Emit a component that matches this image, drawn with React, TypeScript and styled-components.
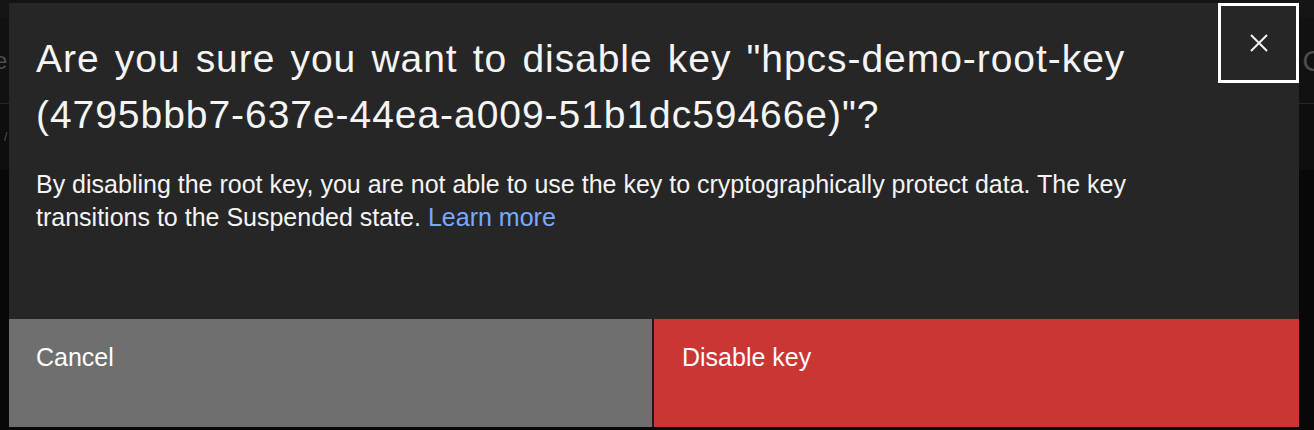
import React from "react";
import styled, { createGlobalStyle } from "styled-components";

const Global = createGlobalStyle`
  html, body { margin: 0; padding: 0; background: #080808; }
  body { font-family: "Liberation Sans", Arial, Helvetica, sans-serif; }
  * { box-sizing: border-box; }
`;

const Page = styled.div`
  position: relative;
  width: 1314px;
  height: 430px;
  overflow: hidden;
  display: flex;
  flex-direction: column;
  background: #080808;
`;

const TopBand = styled.div`
  height: 18px;
  background: #141414;
`;

const HeaderRow = styled.div`
  height: 86px;
  background: #111111;
  border-bottom: 1px solid #262626;
  display: flex;
  align-items: center;
  justify-content: space-between;
  color: #4c4c4c;
  font-size: 24px;
`;

const EdgeText = styled.span<{ $side: "left" | "right" }>`
  margin-left: ${(p) => (p.$side === "left" ? "-6px" : "0")};
  margin-right: ${(p) => (p.$side === "right" ? "-10px" : "0")};
  font-size: ${(p) => (p.$side === "right" ? "30px" : "24px")};
`;

const BodyRow = styled.div`
  height: 66px;
  background: #0e0e0e;
  display: flex;
  align-items: center;
  padding-left: 4px;
  color: #555;
  font-size: 12px;
`;

const Modal = styled.div`
  position: absolute;
  left: 9px;
  top: 3px;
  width: 1290px;
  height: 424px;
  background: #262626;
  display: flex;
  flex-direction: column;
`;

const Header = styled.div`
  padding: 28px 0 0 27px;
`;

const Title = styled.h2`
  margin: 0;
  max-width: 1170px;
  font-size: 39px;
  line-height: 56px;
  letter-spacing: 0.95px;
  word-spacing: 3.4px;
  font-weight: 400;
  color: #f4f4f4;
`;

const Content = styled.p`
  margin: 25px 0 0 27px;
  max-width: 1130px;
  font-size: 25px;
  line-height: 33px;
  color: #f4f4f4;
  flex: 1;
`;

const Link = styled.a`
  color: #78a9ff;
  text-decoration: none;
`;

const Close = styled.button`
  position: absolute;
  top: 0;
  right: 0;
  width: 81px;
  height: 80px;
  border: 3px solid #ffffff;
  background: #262626;
  display: flex;
  align-items: center;
  justify-content: center;
  padding: 0;
  cursor: pointer;
`;

const Footer = styled.div`
  display: grid;
  grid-template-columns: 643px 1fr;
  column-gap: 2px;
  height: 108px;
  background: #1c1c1c;
`;

const Button = styled.button<{ $kind: "secondary" | "danger" }>`
  border: none;
  margin: 0;
  text-align: left;
  display: flex;
  align-items: flex-start;
  padding: 21px 0 0 ${(p) => (p.$kind === "danger" ? "28px" : "27px")};
  font-family: inherit;
  font-size: 25px;
  line-height: 34px;
  color: #ffffff;
  background: ${(p) => (p.$kind === "danger" ? "#c93634" : "#6f6f6f")};
  cursor: pointer;
`;

export default function App() {
  return (
    <>
      <Global />
      <Page>
        <TopBand />
        <HeaderRow>
          <EdgeText $side="left">e</EdgeText>
          <EdgeText $side="right">C</EdgeText>
        </HeaderRow>
        <BodyRow>/</BodyRow>
        <Modal role="dialog">
          <Header>
            <Title>
              Are you sure you want to disable key "hpcs-demo-root-key
              (4795bbb7-637e-44ea-a009-51b1dc59466e)"?
            </Title>
          </Header>
          <Close aria-label="Close">
            <svg width="22" height="22" viewBox="0 0 22 22" fill="none">
              <path d="M3 3 L19 19 M19 3 L3 19" stroke="#f4f4f4" strokeWidth="2" />
            </svg>
          </Close>
          <Content>
            By disabling the root key, you are not able to use the key to cryptographically
            protect data. The key transitions to the Suspended state.{" "}
            <Link href="#">Learn more</Link>
          </Content>
          <Footer>
            <Button $kind="secondary">Cancel</Button>
            <Button $kind="danger">Disable key</Button>
          </Footer>
        </Modal>
      </Page>
    </>
  );
}
